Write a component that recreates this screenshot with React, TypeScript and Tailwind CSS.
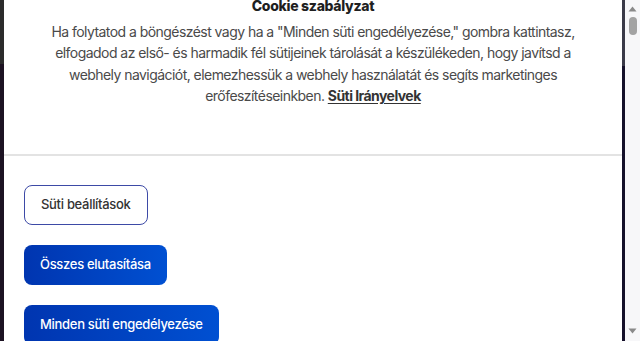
import React from "react";

export default function App() {
  const font = { fontFamily: "Inter, 'Noto Sans', sans-serif" };
  return (
    <div className="w-[640px] h-[341px] flex overflow-hidden bg-white" style={font}>
      <div className="w-[4px] flex flex-col shrink-0">
        <div className="h-[64px] bg-[#2b2b2b]" />
        <div className="flex-1 bg-[#1c1222]" />
      </div>
      <div className="flex-1 bg-white flex flex-col min-h-0">
        <div className="-mt-[4px] shrink-0 flex flex-col items-center px-[40px] text-center">
          <h2 className="text-[14px] leading-[20px] font-extrabold text-[#1f1f1f] tracking-[-0.3px]">Cookie szabályzat</h2>
          <p className="mt-[5px] text-[14px] leading-[21.3px] text-[#4a4a4a] tracking-[-0.55px] max-w-[540px]">
            Ha folytatod a böngészést vagy ha a "Minden süti engedélyezése," gombra kattintasz, elfogadod az első- és harmadik fél sütijeinek tárolását a készülékeden, hogy javítsd a webhely navigációt, elemezhessük a webhely használatát és segíts marketinges erőfeszítéseinkben.{" "}
            <a className="font-bold text-[#333] underline underline-offset-2">Süti Irányelvek</a>
          </p>
        </div>
        <div className="shrink-0 mt-[48px] h-[2px] bg-[#e3e3e3]" />
        <div className="shrink-0 flex flex-col items-start gap-[20px] pt-[29px] px-[20px]">
          <button className="shrink-0 h-[40px] px-[16px] rounded-[8px] border border-[#3d4aa6] text-[13px] font-medium text-[#333] tracking-[-0.3px] bg-white">
            Süti beállítások
          </button>
          <button className="shrink-0 h-[40px] px-[16px] rounded-[8px] text-[13px] font-medium text-white tracking-[-0.3px] bg-gradient-to-r from-[#0035b0] to-[#0050d2]">
            Összes elutasítása
          </button>
          <button className="shrink-0 h-[40px] px-[16px] rounded-[8px] text-[13px] font-medium text-white tracking-[-0.3px] bg-gradient-to-r from-[#0035b0] to-[#0050d2]">
            Minden süti engedélyezése
          </button>
        </div>
      </div>
      <div className="w-[3px] flex flex-col shrink-0">
        <div className="h-[66px] bg-[#3a3a48]" />
        <div className="flex-1 bg-[#15102a]" />
      </div>
      <div className="w-[15px] shrink-0 bg-[#f7f7f9] flex flex-col items-center">
        <svg width="9" height="6" viewBox="0 0 9 6" className="mt-[6px]">
          <path d="M0.5 5.5 L4.5 0.5 L8.5 5.5 Z" fill="#8a8a8a" />
        </svg>
        <div className="mt-[5px] w-[8px] h-[18px] rounded-[4px] bg-[#a3a3a3]" />
        <div className="flex-1" />
        <svg width="9" height="6" viewBox="0 0 9 6" className="mb-[7px]">
          <path d="M0.5 0.5 L8.5 0.5 L4.5 5.5 Z" fill="#8a8a8a" />
        </svg>
      </div>
    </div>
  );
}
